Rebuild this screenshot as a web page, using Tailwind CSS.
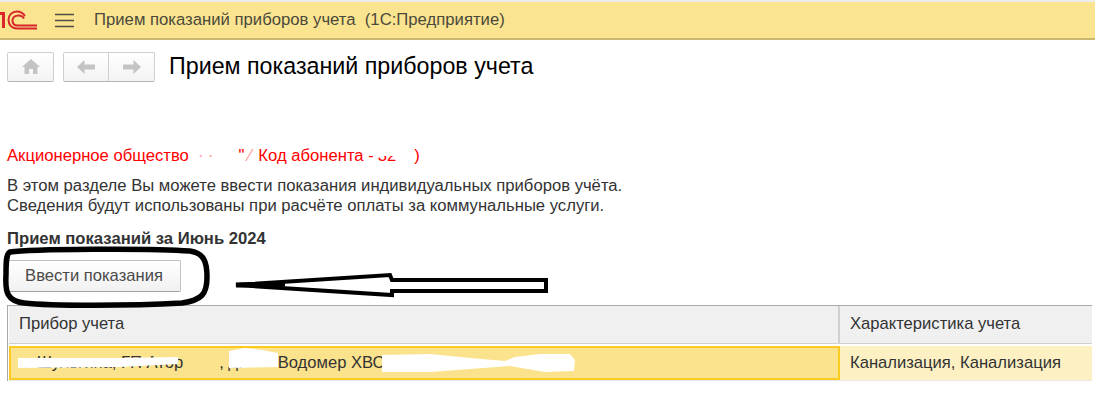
<!DOCTYPE html>
<html lang="en">
<head>
    <meta charset="UTF-8">
    <title>Прием показаний приборов учета</title>
    <script src="https://cdn.jsdelivr.net/npm/@tailwindcss/browser@4"></script>
</head>
<body class="relative w-[1095px] h-[404px] overflow-hidden bg-white font-['Liberation_Sans',Arial,sans-serif] text-[#333]">
    <!-- top bar -->
    <div class="border-t-2 border-[#ececec] h-[40px] flex items-center bg-[#fbe48f] border-b-2 border-b-[#c9b66f]">
        <svg class="w-[37px] h-[20px] shrink-0" viewBox="0 0 37 20" fill="none" stroke="#d8262c">
            <path d="M0 3.500h3.500V18" stroke-width="3"/>
            <path d="M25 6C23 3 20 1.500 17 1.500 12 1.500 8.500 5 8.500 10s3.500 8.500 8.500 8.500h20" stroke-width="2"/>
            <path d="M24 8.500C23 6.500 21 5.500 18.500 5.500 15 5.500 12.500 7.500 12.500 10.500s2 5 5 5H37" stroke-width="2"/>
        </svg>
        <svg class="ml-[18px] w-[19px] h-[15px] shrink-0" viewBox="0 0 19 15" stroke="#4d4d45" stroke-width="1.500">
            <path d="M0 1.500h19M0 7.500h19M0 13.500h19"/>
        </svg>
        <div class="ml-[20px] text-[16.700px] text-[#4a4a3c] whitespace-pre">Прием показаний приборов учета  (1С:Предприятие)</div>
    </div>

    <!-- toolbar and title -->
    <div class="mt-[11px] ml-[7px] flex items-center h-[31px]">
        <button class="w-[47px] h-[30px] flex items-center justify-center bg-gradient-to-b from-white to-[#f3f3f3] border border-[#cfcfcf] border-b-[#b5b5b5] rounded-[2px]">
            <svg class="w-[18px] h-[15px]" viewBox="0 0 18 15" fill="#c4c4c4"><path d="M9 0 0 8h2.500v7h4.500v-5h4v5h4.500V8H18z"/></svg>
        </button>
        <div class="ml-[9px] w-[92px] h-[30px] flex bg-gradient-to-b from-white to-[#f3f3f3] border border-[#cfcfcf] border-b-[#b5b5b5] rounded-[2px]">
            <div class="w-[45px] flex items-center justify-center border-r border-[#cfcfcf]">
                <svg class="w-[18px] h-[14px]" viewBox="0 0 18 14" fill="#c4c4c4"><path d="M7.500 0 0 7l7.500 7V9.500H18v-5H7.500z"/></svg>
            </div>
            <div class="flex-1 flex items-center justify-center">
                <svg class="w-[18px] h-[14px]" viewBox="0 0 18 14" fill="#c4c4c4"><path d="M10.500 0 18 7l-7.500 7V9.500H0v-5h10.500z"/></svg>
            </div>
        </div>
        <h1 class="ml-[14px] mb-[2px] text-[23.250px] text-black leading-[30px]">Прием показаний приборов учета</h1>
    </div>

    <!-- text -->
    <div class="px-[7px]">
        <p class="mt-[64px] h-[20px] leading-[20px] text-[16.650px] text-[#ff0000] whitespace-nowrap">Акционерное общество<span class="ml-[9px] text-[#ff9a9a]">· ·</span><span class="ml-[25px]">"</span><span class="ml-[4px] text-[#ff9a9a]">⁄</span><span class="ml-[7px]">Код абонента -</span><span class="ml-[4px]">32</span><span class="ml-[18px]">)</span></p>
        <p class="mt-[10px] text-[16.650px] leading-[20px]">В этом разделе Вы можете ввести показания индивидуальных приборов учёта.<br>Сведения будут использованы при расчёте оплаты за коммунальные услуги.</p>
        <p class="mt-[13px] text-[16.650px] leading-[20px] font-bold">Прием показаний за Июнь 2024</p>
        <button class="mt-[11px] block w-[174px] h-[32px] text-[16.600px] text-[#4a4a4a] bg-gradient-to-b from-white to-[#f1f1f1] border border-[#c2c2c2] border-b-[#a0a0a0] rounded-[2px]">Ввести показания</button>
    </div>

    <!-- table -->
    <div class="mt-[13px] ml-[7px] mr-[3px] border-l border-t border-[#aaaaaa] pl-[1px] text-[16.600px]">
        <div class="flex h-[38px] border-b border-[#d0d0d0]">
            <div class="w-[831px] pl-[10px] flex items-center bg-[#f0f0f0] border-r-2 border-[#d0d0d0]">Прибор учета</div>
            <div class="flex-1 pl-[10px] flex items-center bg-[#f0f0f0]">Характеристика учета</div>
        </div>
        <div class="flex h-[35px] mt-[2px] border-b border-[#e8e8e8]">
            <div class="w-[831px] pl-[8px] flex items-center bg-[#fbe38e] border-2 border-[#fccb22] whitespace-nowrap">
                <span>г.</span>
                <span class="ml-[9px]">Шульгина, ГП Атор</span>
                <span class="ml-[36px]">, д.</span>
                <span class="ml-[35px]">Водомер ХВС</span>
            </div>
            <div class="flex-1 pl-[10px] flex items-center bg-[#fdf1c3]">Канализация, Канализация</div>
        </div>
    </div>

    <!-- hand-drawn marks on top of the screenshot -->
    <svg class="absolute left-0 top-0 w-[1095px] h-[404px] pointer-events-none" viewBox="0 0 1095 404" fill="none">
        <path d="M10 252C30 249 150 248 190 251 204 253 207 262 207 277 207 294 202 300 182 303 130 306 50 306 24 303 7 301 5 292 6 275 6 262 6 254 10 252Z" stroke="#000" stroke-width="5.500"/>
        <path d="M236 285 390 275 392 280H546V291H392L392 295Z" fill="#fff" stroke="#000" stroke-width="4"/>
        <path d="M236 285 285 284" stroke="#000" stroke-width="5"/>
        <!-- redactions -->
        <rect x="376" y="147" width="30" height="9" fill="#fff"/>
        <path d="M18 358H120L178 357V364L120 367 18 368Z" fill="#fff"/>
        <path d="M229 351 245 348 262 350 278 353V367L229 368Z" fill="#fff"/>
        <path d="M382 355 430 354 470 358 505 361 515 357 540 354 570 354 575 360 574 371 545 372 510 366 470 369 430 372 382 372Z" fill="#fff"/>
    </svg>
</body>
</html>
